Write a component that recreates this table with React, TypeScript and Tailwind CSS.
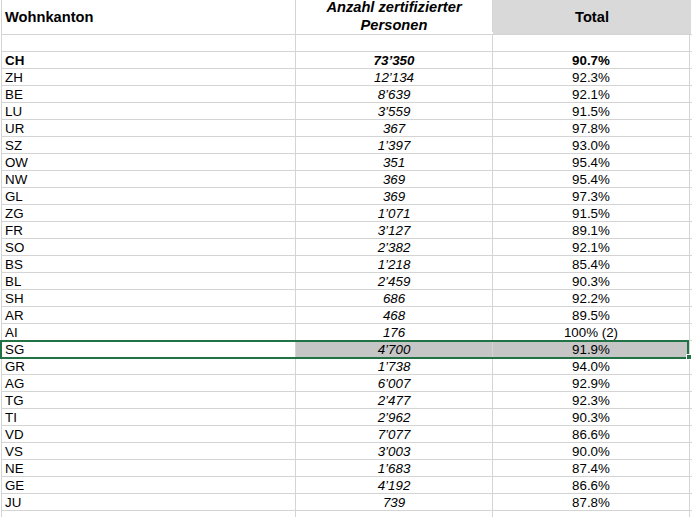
import React from 'react';

type Row = { kanton: string; anzahl: string; total: string };

const rows: Row[] = [
    { kanton: 'CH', anzahl: '73’350', total: '90.7%' },
    { kanton: 'ZH', anzahl: '12’134', total: '92.3%' },
    { kanton: 'BE', anzahl: '8’639', total: '92.1%' },
    { kanton: 'LU', anzahl: '3’559', total: '91.5%' },
    { kanton: 'UR', anzahl: '367', total: '97.8%' },
    { kanton: 'SZ', anzahl: '1’397', total: '93.0%' },
    { kanton: 'OW', anzahl: '351', total: '95.4%' },
    { kanton: 'NW', anzahl: '369', total: '95.4%' },
    { kanton: 'GL', anzahl: '369', total: '97.3%' },
    { kanton: 'ZG', anzahl: '1’071', total: '91.5%' },
    { kanton: 'FR', anzahl: '3’127', total: '89.1%' },
    { kanton: 'SO', anzahl: '2’382', total: '92.1%' },
    { kanton: 'BS', anzahl: '1’218', total: '85.4%' },
    { kanton: 'BL', anzahl: '2’459', total: '90.3%' },
    { kanton: 'SH', anzahl: '686', total: '92.2%' },
    { kanton: 'AR', anzahl: '468', total: '89.5%' },
    { kanton: 'AI', anzahl: '176', total: '100% (2)' },
    { kanton: 'SG', anzahl: '4’700', total: '91.9%' },
    { kanton: 'GR', anzahl: '1’738', total: '94.0%' },
    { kanton: 'AG', anzahl: '6’007', total: '92.9%' },
    { kanton: 'TG', anzahl: '2’477', total: '92.3%' },
    { kanton: 'TI', anzahl: '2’962', total: '90.3%' },
    { kanton: 'VD', anzahl: '7’077', total: '86.6%' },
    { kanton: 'VS', anzahl: '3’003', total: '90.0%' },
    { kanton: 'NE', anzahl: '1’683', total: '87.4%' },
    { kanton: 'GE', anzahl: '4’192', total: '86.6%' },
    { kanton: 'JU', anzahl: '739', total: '87.8%' },
];

const cell = 'h-full border-r border-[#d4d4d4] leading-[17px] whitespace-nowrap overflow-hidden';

function DataRow({ row, bold, selected }: { row: Row; bold?: boolean; selected?: boolean }) {
    return (
        <div className={`flex h-[17px] border-b border-[#d4d4d4] text-[13.33px] ${bold ? 'font-bold' : ''}`}>
            <div className={`${cell} w-[295px] border-l pl-[3px]`}>{row.kanton}</div>
            <div className={`${cell} w-[197px] text-center italic ${selected ? 'bg-[#c6c6c6]' : ''}`}>{row.anzahl}</div>
            <div className={`${cell} w-[197px] text-center ${selected ? 'bg-[#c6c6c6]' : ''}`}>{row.total}</div>
        </div>
    );
}

export default function App() {
    return (
        <div
            className="relative w-[692px] h-[517px] overflow-hidden bg-white text-black"
            style={{ fontFamily: '"Liberation Sans", Arial, sans-serif' }}
        >
            <div className="flex flex-col ml-[1px] w-[691px]">
                {/* Header */}
                <div className="flex h-[35px] border-b border-[#d4d4d4] text-[14.67px] font-bold">
                    <div className="w-[295px] h-full border-l border-r border-[#d4d4d4] pl-[3px] flex items-center">
                        Wohnkanton
                    </div>
                    <div className="w-[197px] h-full border-r border-[#d4d4d4] text-center italic leading-[18px] -mt-[2px]">
                        Anzahl zertifizierter
                        <br />
                        Personen
                    </div>
                    <div className="w-[198px] h-full bg-[#d9d9d9] flex items-center justify-center">Total</div>
                </div>

                {/* empty spacer row */}
                <div className="flex h-[17px] border-b border-[#d4d4d4]">
                    <div className={`${cell} w-[295px] border-l`} />
                    <div className={`${cell} w-[197px]`} />
                    <div className={`${cell} w-[197px]`} />
                </div>

                {rows.map((r, i) => (
                    <DataRow key={r.kanton} row={r} bold={i === 0} selected={r.kanton === 'SG'} />
                ))}

                <div className="flex h-[17px]">
                    <div className={`${cell} w-[295px] border-l`} />
                    <div className={`${cell} w-[197px]`} />
                    <div className={`${cell} w-[197px]`} />
                </div>
            </div>

            {/* selection frame on SG row */}
            <div className="absolute left-0 top-[340px] w-[689px] h-[19px] border-2 border-[#217346] pointer-events-none" />
            <div className="absolute left-[686px] top-[354px] w-[6px] h-[6px] bg-[#217346] border border-white" />
        </div>
    );
}
